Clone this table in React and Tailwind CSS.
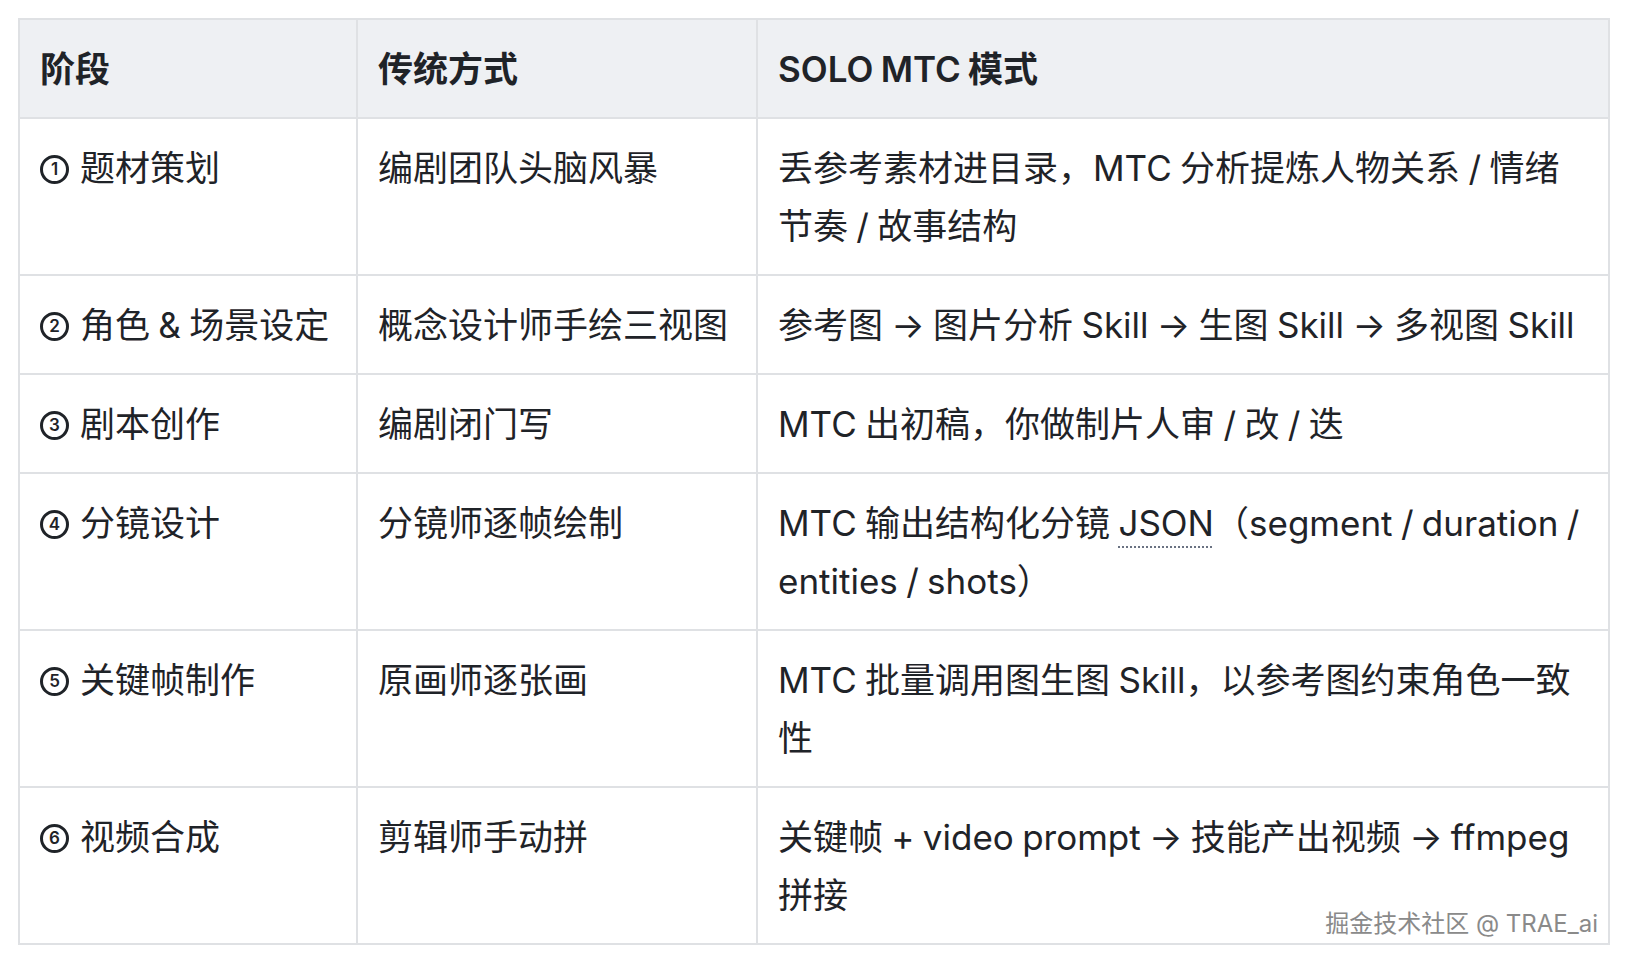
import React from 'react';

const Num = ({ n }) => (
  <span className="inline-flex items-center justify-center w-[29px] h-[29px] mr-[11px] rounded-full border-[3px] border-[#1f2328] text-[17px] leading-none font-semibold align-[6px]">
    {n}
  </span>
);

const rows = [
  {
    n: 1,
    stage: '题材策划',
    old: '编剧团队头脑风暴',
    solo: <>丢参考素材进目录，MTC 分析提炼人物关系 / 情绪<br />节奏 / 故事结构</>,
  },
  {
    n: 2,
    stage: '角色 & 场景设定',
    old: '概念设计师手绘三视图',
    solo: <>参考图 → 图片分析 Skill → 生图 Skill → 多视图 Skill</>,
  },
  {
    n: 3,
    stage: '剧本创作',
    old: '编剧闭门写',
    solo: <>MTC 出初稿，你做制片人审 / 改 / 迭</>,
  },
  {
    n: 4,
    stage: '分镜设计',
    old: '分镜师逐帧绘制',
    solo: (
      <>
        MTC 输出结构化分镜{' '}
        <span className="underline decoration-dotted decoration-gray-500 decoration-2 underline-offset-[10px]">JSON</span>
        （segment / duration /<br />entities / shots）
      </>
    ),
  },
  {
    n: 5,
    stage: '关键帧制作',
    old: '原画师逐张画',
    solo: <>MTC 批量调用图生图 Skill，以参考图约束角色一致<br />性</>,
  },
  {
    n: 6,
    stage: '视频合成',
    old: '剪辑师手动拼',
    solo: <>关键帧 + video prompt → 技能产出视频 → ffmpeg<br />拼接</>,
  },
];

const cell = 'border-2 border-[#dfe1e4] pl-[20px] pr-[16px] pt-[20px] pb-[19px] align-top whitespace-nowrap';

export default function App() {
  return (
    <div className="relative w-[1630px] h-[964px] bg-white text-[#1f2328] font-['Inter','Noto_Sans_CJK_SC',sans-serif]">
      <div className="pt-[18px] pl-[18px]">
        <table className="table-fixed border-collapse w-[1590px] text-[35px] leading-[58px] [word-spacing:-1.5px]">
          <colgroup>
            <col className="w-[338px]" />
            <col className="w-[400px]" />
            <col className="w-[852px]" />
          </colgroup>
          <thead>
            <tr className="bg-[#eef0f3]">
              <th className={`${cell} text-left font-semibold`}>阶段</th>
              <th className={`${cell} text-left font-semibold`}>传统方式</th>
              <th className={`${cell} text-left font-semibold`}>SOLO MTC 模式</th>
            </tr>
          </thead>
          <tbody>
            {rows.map((r) => (
              <tr key={r.n}>
                <td className={cell}>
                  <Num n={r.n} />
                  {r.stage}
                </td>
                <td className={cell}>{r.old}</td>
                <td className={cell}>{r.solo}</td>
              </tr>
            ))}
          </tbody>
        </table>
      </div>
      {/* 水印 */}
      <div className="absolute right-[32px] top-[909px] text-[24px] leading-[30px] text-[#8a8a8a] [text-shadow:0_0_2px_#fff,1px_1px_1px_#fff]">
        掘金技术社区 @ TRAE_ai
      </div>
    </div>
  );
}
